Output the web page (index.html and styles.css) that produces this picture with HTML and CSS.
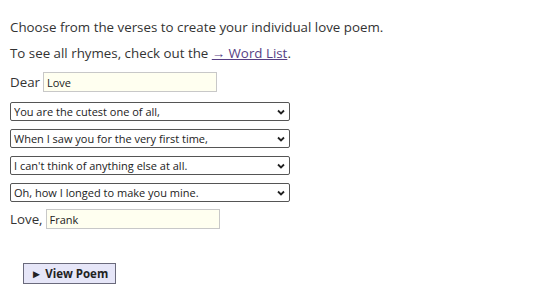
FILE: index.html
```html
<!DOCTYPE html>
<html lang="en">
<head>
    <meta charset="UTF-8">
    <title>Love Poem Generator</title>
    <link rel="stylesheet" href="styles.css">
</head>
<body>

    <div class="poem-form">
        <!-- Intro -->
        <p class="intro">Choose from the verses to create your individual love poem.</p>
        <p class="intro">To see all rhymes, check out the <a href="#">&rarr; Word List</a>.</p>

        <!-- Greeting -->
        <div class="line greeting">
            <span>Dear</span>
            <input type="text" class="name-input" value="Love">
        </div>

        <!-- Verses -->
        <select class="verse">
            <option>You are the cutest one of all,</option>
        </select>
        <select class="verse">
            <option>When I saw you for the very first time,</option>
        </select>
        <select class="verse">
            <option>I can't think of anything else at all.</option>
        </select>
        <select class="verse">
            <option>Oh, how I longed to make you mine.</option>
        </select>

        <!-- Signature -->
        <div class="line signature">
            <span>Love,</span>
            <input type="text" class="name-input" value="Frank">
        </div>

        <button class="view-btn">&#9658; View Poem</button>
    </div>

</body>
</html>
```

FILE: styles.css
```css
/* General Styling */
body {
    font-family: "Open Sans", "Noto Sans", sans-serif;
    font-size: 10pt;
    color: #333;
    background: #fff;
    margin: 0;
    padding: 17px 10px 0 10px;
}
.poem-form {
    display: flex;
    flex-direction: column;
    align-items: flex-start;
}
.intro {
    margin: 0 0 6px 0;
    line-height: 20px;
}
.intro a {
    color: #573f85;
}
/* Greeting and signature lines */
.line {
    display: flex;
    align-items: center;
    gap: 3px;
    height: 20px;
    line-height: 20px;
}
.greeting {
    margin: 3px 0 10px 0;
}
.signature {
    margin: -1px 0 0 0;
}
.name-input {
    font-family: "Open Sans", "Noto Sans", sans-serif;
    font-size: 11px;
    color: #222;
    width: 174px;
    height: 20px;
    box-sizing: border-box;
    padding: 0 3px;
    background: #fffff0;
    border: 1px solid #c8c8c8;
}
/* Verse dropdowns */
.verse {
    appearance: none;
    font-family: "Open Sans", "Noto Sans", sans-serif;
    font-size: 11px;
    color: #222;
    width: 280px;
    height: 19px;
    line-height: 17px;
    box-sizing: border-box;
    padding: 0 3px;
    margin-bottom: 8px;
    background: #fff url("data:image/svg+xml,%3Csvg xmlns='http://www.w3.org/2000/svg' width='8' height='6'%3E%3Cpath d='M1 1.5l3 3 3-3' fill='none' stroke='%23222' stroke-width='1.8'/%3E%3C/svg%3E") no-repeat right 4px center;
    border: 1px solid #555;
    border-radius: 2px;
}
/* Button */
.view-btn {
    font-family: "Open Sans", "Noto Sans", sans-serif;
    font-size: 11.5px;
    font-weight: bold;
    color: #222;
    margin: 34px 0 0 13px;
    width: 93px;
    height: 21px;
    padding: 0;
    background: #e6e6f8;
    border: 1px solid #6a6a7c;
    border-radius: 0;
}
```
